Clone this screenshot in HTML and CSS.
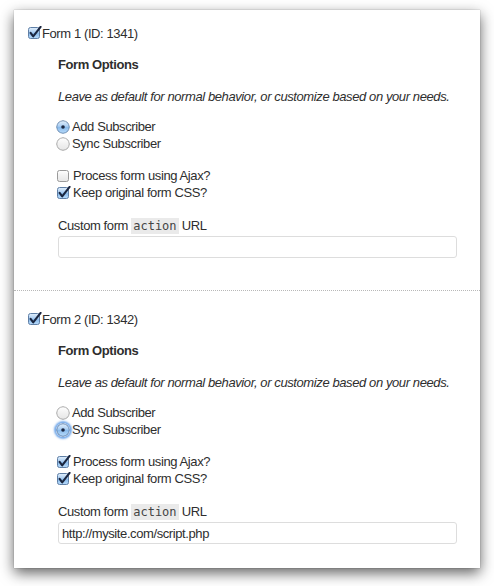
FILE: index.html
```html
<!DOCTYPE html>
<html>
<head>
<meta charset="utf-8">
<link rel="stylesheet" href="styles.css">
</head>
<body>
<svg class="defs" width="0" height="0" aria-hidden="true">
  <defs>
    <linearGradient id="gBlue" x1="0" y1="0" x2="0" y2="1">
      <stop offset="0" stop-color="#e2effb"/>
      <stop offset="0.45" stop-color="#a9cdf2"/>
      <stop offset="0.5" stop-color="#86b8ea"/>
      <stop offset="1" stop-color="#b9dcfb"/>
    </linearGradient>
    <linearGradient id="gWhite" x1="0" y1="0" x2="0" y2="1">
      <stop offset="0" stop-color="#ffffff"/>
      <stop offset="0.5" stop-color="#f1f1f1"/>
      <stop offset="1" stop-color="#e6e6e6"/>
    </linearGradient>
  </defs>
</svg>

<div class="card">
  <section class="form">
    <div class="form-head">
      <svg class="cb" width="14" height="14" viewBox="0 0 14 14"><rect x="0.5" y="1.5" width="11" height="11" rx="2" fill="url(#gBlue)" stroke="#5f7fa6"/><path d="M2.6 6.8 L5.2 10.3 L12.6 0.9" fill="none" stroke="#1a2640" stroke-width="2.1" stroke-linecap="round" stroke-linejoin="round"/></svg>
      <span>Form 1 (ID: 1341)</span>
    </div>
    <div class="form-body">
      <div class="title">Form Options</div>
      <div class="desc">Leave as default for normal behavior, or customize based on your needs.</div>
      <div class="group radios">
        <div class="opt"><svg class="rd" width="14" height="14" viewBox="0 0 14 14"><circle cx="7" cy="7" r="6.3" fill="url(#gBlue)" stroke="#5f7fa6" stroke-width="0.9"/><circle cx="7" cy="7" r="1.8" fill="#1a2640"/></svg><span>Add Subscriber</span></div>
        <div class="opt"><svg class="rd" width="14" height="14" viewBox="0 0 14 14"><circle cx="7" cy="7" r="6.3" fill="url(#gWhite)" stroke="#9a9a9a" stroke-width="0.9"/></svg><span>Sync Subscriber</span></div>
      </div>
      <div class="group checks">
        <div class="opt"><svg class="cbo" width="14" height="14" viewBox="0 0 14 14"><rect x="0.5" y="1.5" width="11" height="11" rx="2" fill="url(#gWhite)" stroke="#9a9a9a"/></svg><span>Process form using Ajax?</span></div>
        <div class="opt"><svg class="cbo" width="14" height="14" viewBox="0 0 14 14"><rect x="0.5" y="1.5" width="11" height="11" rx="2" fill="url(#gBlue)" stroke="#5f7fa6"/><path d="M2.6 6.8 L5.2 10.3 L12.6 0.9" fill="none" stroke="#1a2640" stroke-width="2.1" stroke-linecap="round" stroke-linejoin="round"/></svg><span>Keep original form CSS?</span></div>
      </div>
      <div class="field-label">Custom form <code>action</code> URL</div>
      <input class="url" type="text" value="">
    </div>
  </section>

  <section class="form">
    <div class="form-head">
      <svg class="cb" width="14" height="14" viewBox="0 0 14 14"><rect x="0.5" y="1.5" width="11" height="11" rx="2" fill="url(#gBlue)" stroke="#5f7fa6"/><path d="M2.6 6.8 L5.2 10.3 L12.6 0.9" fill="none" stroke="#1a2640" stroke-width="2.1" stroke-linecap="round" stroke-linejoin="round"/></svg>
      <span>Form 2 (ID: 1342)</span>
    </div>
    <div class="form-body">
      <div class="title">Form Options</div>
      <div class="desc">Leave as default for normal behavior, or customize based on your needs.</div>
      <div class="group radios">
        <div class="opt"><svg class="rd" width="14" height="14" viewBox="0 0 14 14"><circle cx="7" cy="7" r="6.3" fill="url(#gWhite)" stroke="#9a9a9a" stroke-width="0.9"/></svg><span>Add Subscriber</span></div>
        <div class="opt"><svg class="rd focus" width="14" height="14" viewBox="0 0 14 14"><circle cx="7" cy="7" r="6.3" fill="url(#gBlue)" stroke="#4f74a3" stroke-width="0.9"/><circle cx="7" cy="7" r="1.8" fill="#1a2640"/></svg><span>Sync Subscriber</span></div>
      </div>
      <div class="group checks">
        <div class="opt"><svg class="cbo" width="14" height="14" viewBox="0 0 14 14"><rect x="0.5" y="1.5" width="11" height="11" rx="2" fill="url(#gBlue)" stroke="#5f7fa6"/><path d="M2.6 6.8 L5.2 10.3 L12.6 0.9" fill="none" stroke="#1a2640" stroke-width="2.1" stroke-linecap="round" stroke-linejoin="round"/></svg><span>Process form using Ajax?</span></div>
        <div class="opt"><svg class="cbo" width="14" height="14" viewBox="0 0 14 14"><rect x="0.5" y="1.5" width="11" height="11" rx="2" fill="url(#gBlue)" stroke="#5f7fa6"/><path d="M2.6 6.8 L5.2 10.3 L12.6 0.9" fill="none" stroke="#1a2640" stroke-width="2.1" stroke-linecap="round" stroke-linejoin="round"/></svg><span>Keep original form CSS?</span></div>
      </div>
      <div class="field-label">Custom form <code>action</code> URL</div>
      <input class="url" type="text" value="http://mysite.com/script.php">
    </div>
  </section>
</div>
</body>
</html>
```

FILE: styles.css
```css
html, body {
  margin: 0;
  padding: 0;
  background: #ffffff;
}

body {
  font-family: "Liberation Sans", Helvetica, Arial, sans-serif;
  font-size: 13px;
  letter-spacing: -0.4px;
  color: #2e2e2e;
  padding-bottom: 18px;
}

.defs {
  position: absolute;
  width: 0;
  height: 0;
  overflow: hidden;
}

.card {
  margin: 10px 0 0 14px;
  width: 466px;
  box-sizing: border-box;
  padding: 14px 0 24px;
  background: #ffffff;
  box-shadow: 0 0 1px rgba(0, 0, 0, 0.35), 0 5px 13px rgba(0, 0, 0, 0.62);
}

.form {
  padding-bottom: 32px;
}

.form + .form {
  border-top: 1px dotted #b8b8b8;
  padding-top: 19px;
  padding-bottom: 0;
}

.form-head {
  display: flex;
  align-items: center;
  height: 18px;
  padding-left: 14px;
}

.form-head .cb {
  display: block;
  flex: none;
}

.form-body {
  padding-left: 44px;
  padding-right: 23px;
}

.title {
  font-weight: bold;
  margin-top: 14px;
  line-height: 18px;
}

.desc {
  font-style: italic;
  margin-top: 14px;
  line-height: 18px;
  white-space: nowrap;
}

.group {
  margin-top: 12px;
}

.group.checks {
  margin-top: 15px;
}

.opt {
  display: flex;
  align-items: center;
  height: 17px;
}

.opt svg {
  display: block;
  flex: none;
}

.rd {
  margin-left: -2px;
  margin-right: 2px;
  border-radius: 50%;
}

.rd.focus {
  box-shadow: 0 0 2px 2px rgba(70, 140, 225, 0.75);
}

.cbo {
  margin-left: -1px;
  margin-right: 2px;
}

.field-label {
  margin-top: 16px;
  line-height: 17px;
}

code {
  font-family: "DejaVu Sans Mono", "Liberation Mono", monospace;
  font-size: 12px;
  letter-spacing: 0;
  color: #444444;
  background: #eaeaea;
  padding: 1px 2px;
}

.url {
  display: block;
  margin: 1px 0 0;
  width: 399px;
  height: 22px;
  box-sizing: border-box;
  border: 1px solid #dddddd;
  border-radius: 3px;
  padding: 0 3px;
  font-family: "Liberation Sans", Helvetica, Arial, sans-serif;
  font-size: 13px;
  letter-spacing: -0.4px;
  color: #2e2e2e;
  background: #ffffff;
  outline: none;
}
```
